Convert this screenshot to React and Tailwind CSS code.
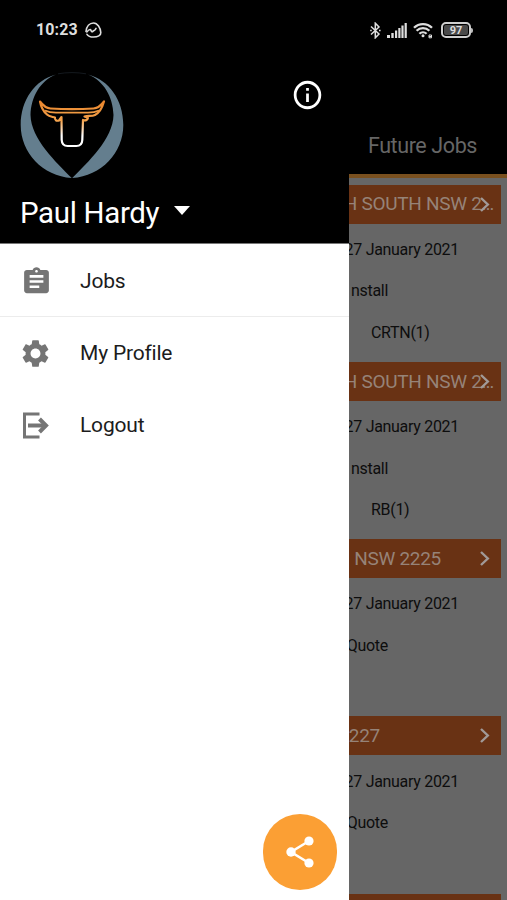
import { MdAssignment, MdSettings, MdInfoOutline } from "react-icons/md";

const jobs = [
  { title: "H SOUTH NSW 2…", type: "nstall", item: "CRTN(1)" },
  { title: "H SOUTH NSW 2…", type: "nstall", item: "RB(1)" },
  { title: "NSW 2225", type: "Quote" },
  { title: "227", type: "Quote" },
];

// where each clipped title ends inside its bar
const titleInset = ["pr-[7px]", "pr-[7px]", "pr-[60px]", "pr-[121px]"];

function StatusBar() {
  return (
    <div className="flex h-[60px] shrink-0 items-center justify-between bg-black pl-[36px] pr-[34px] text-[#dedede]">
      <div className="flex items-center gap-[7px]">
        <span className="text-[16px] font-bold leading-none tracking-[0.1px]">10:23</span>
        <svg className="h-[16px] w-[17px]" viewBox="0 0 17 16" fill="none" stroke="currentColor" strokeWidth="1.6" strokeLinecap="round" strokeLinejoin="round">
          <path d="M1 9.500C1.500 4.500 4.500 1 8.500 1c4 0 7 5 7.300 9.500.2 3-3 4.500-7.300 4.500C5.500 15 3 14 2 12.300" />
          <path d="M1.800 10C3 8.600 4.300 7.400 5.300 7.600c1 .2.700 2.200 1.700 2.200s1.200-1.300 2-1.200c.9 0 1.300-1 2-2.200" />
        </svg>
      </div>
      <div className="flex items-center">
        <svg className="h-[17px] w-[11px]" viewBox="0 0 11 17" fill="none" stroke="currentColor" strokeWidth="1.500">
          <path d="M1 4.500l8 7.500-3.700 3.800V1.200L9 5l-8 7.500" />
          <path d="M.2 8.500h1.500M9 8.500h1.600" strokeWidth="1.600" />
        </svg>
        <svg className="ml-[6px] h-[15px] w-[20px]" viewBox="0 0 20 15" fill="currentColor">
          <path d="M0 12h3v3H0zM4.300 10h2.400v5H4.300zM8 7.500h2.200V15H8zM11.300 5h2.200v10h-2.200zM14.400 2.500h2.200V15h-2.200zM17.600 0h2.200v15h-2.200z" />
        </svg>
        <svg className="ml-[6px] mr-px h-[17px] w-[21px]" viewBox="0 0 21 17" fill="none" stroke="currentColor" strokeWidth="2.300">
          <path d="M1 5.800c5-5 13-5 18 0M3.600 8.800c3.500-3.500 9.200-3.500 12.800 0M6.400 11.800c2-2 5.200-2 7.200 0" />
          <circle cx="10" cy="13.800" r="1.500" fill="currentColor" stroke="none" />
          <path d="M16 13h2.500v2.800H16zM16 14.500h3" strokeWidth="1" />
        </svg>
        <div className="ml-[6px] flex h-[16px] w-[30px] items-center justify-center rounded-[5px] border-2 border-[#cfcfcf] bg-black p-px">
          <div className="flex h-full w-full items-center justify-center rounded-[2px] bg-[#4a4a4a] text-[11px] font-bold leading-none">97</div>
        </div>
        <div className="h-[5px] w-[2px] rounded-r bg-[#bbb]" />
      </div>
    </div>
  );
}

function BullLogo() {
  return (
    <svg className="h-[107px] w-[104px]" viewBox="0 0 104 107" fill="none">
      <defs>
        <linearGradient id="horns" x1="0" y1="28" x2="0" y2="74" gradientUnits="userSpaceOnUse">
          <stop offset="0" stopColor="#e8832a" />
          <stop offset="0.45" stopColor="#f5a34c" />
          <stop offset="0.78" stopColor="#fff" />
        </linearGradient>
      </defs>
      <path
        d="M36 2.500C15 8 .7 28 .7 53c0 28 22 51 51 53C36 90 11 67 10.500 43 11 25 20 9 36 2.500Z"
        fill="#647e8e"
      />
      <path
        d="M68 2.500C89 8 103.300 28 103.300 53c0 28-22 51-51 53C68 90 93 67 93.500 43 93 25 84 9 68 2.500Z"
        fill="#647e8e"
      />
      <path d="M38 1.800C47 .2 57 .2 66 1.800" stroke="#1c242b" strokeWidth=".7" />
      <path
        d="M20 29.500c3 4 6 6.700 10.500 7 14 .9 29 .9 43 0C78 36.200 81 33.500 84 29.500c-2 7-5 11.500-9 13.500-3.500 1.800-7 .3-10.500 1.500l3.500 1.300c-.5 2.500-2.500 3-5 2.200L62.300 68c-.2 4.200-2 6-6 6h-8.600c-4 0-5.800-1.800-6-6L41.500 45l-2.500 3.500c-2.500.8-4.500-.5-4-3C31 44.500 29 44.500 27 42.500c-3.500-3-6-7.500-7-13Z"
        stroke="url(#horns)"
        strokeWidth="2.200"
        strokeLinejoin="round"
      />
      <path d="M25 38.500c4 2 7 2.200 11 2.200h32c4 0 7-.2 11-2.200" stroke="#f09a42" strokeWidth="1.800" />
    </svg>
  );
}

function LogoutIcon() {
  return (
    <svg className="h-[27px] w-[27px]" viewBox="0 0 27 27" fill="none" stroke="#757575" strokeWidth="3">
      <path d="M17.500 2H2.500v23h15" />
      <path d="M6 13.500h18" strokeWidth="4" />
      <path d="M17.500 7l6.500 6.500-6.500 6.500" strokeWidth="4" />
    </svg>
  );
}

function MenuItem({ icon, label, divider }) {
  return (
    <div
      className={
        divider
          ? "flex h-[73px] items-center border-b border-[#ececec] pl-[22px] pt-[2px]"
          : "flex h-[72px] items-center pl-[22px]"
      }
    >
      <span className="flex w-[58px] items-center">{icon}</span>
      <span className="pt-px text-[21px] leading-none tracking-[-0.2px] text-[#1c1c1c]">{label}</span>
    </div>
  );
}

function Drawer() {
  return (
    <div className="relative flex w-[349px] shrink-0 flex-col bg-white">
      <div className="flex h-[184px] shrink-0 flex-col border-b border-[#777] bg-black pl-[20px] pt-[12px]">
        <div className="flex items-start justify-between pr-[25px]">
          <BullLogo />
          <MdInfoOutline className="mt-[6px] h-[34px] w-[33px] text-white" preserveAspectRatio="none" />
        </div>
        <div className="mt-[15px] flex items-center text-white">
          <span className="text-[29.500px] leading-[38px] tracking-[-0.350px]">Paul Hardy</span>
          <svg className="mb-[5px] ml-[15px] h-[9px] w-[16px]" viewBox="0 0 16 9" fill="currentColor">
            <path d="M0 0h16L8 9z" />
          </svg>
        </div>
      </div>
      <MenuItem
        divider
        label="Jobs"
        icon={<MdAssignment className="-ml-[2px] h-[31px] w-[33px] text-[#757575]" preserveAspectRatio="none" />}
      />
      <MenuItem
        label="My Profile"
        icon={<MdSettings className="-ml-[3px] h-[33px] w-[33px] text-[#757575]" preserveAspectRatio="none" />}
      />
      <MenuItem label="Logout" icon={<LogoutIcon />} />
      <button className="absolute bottom-[10px] right-[12.500px] flex h-[76px] w-[74px] items-center justify-center rounded-full bg-[#fb9f34] text-white">
        <svg className="h-[32px] w-[28px]" viewBox="0 0 28 32" fill="currentColor">
          <path d="M23 5 5 16l18 11" fill="none" stroke="currentColor" strokeWidth="2.600" />
          <circle cx="5" cy="16" r="4.700" />
          <circle cx="23" cy="5" r="4.600" />
          <circle cx="23" cy="27" r="4.600" />
        </svg>
      </button>
    </div>
  );
}

function JobCard({ job, inset }) {
  return (
    <div className="mr-[6px] h-[177.300px] shrink-0 text-[16px] tracking-[-0.300px] text-[#0d0d0d]">
      <div className="relative flex h-[39px] items-center bg-[#693214]">
        <div className={`flex w-full justify-end overflow-hidden whitespace-nowrap pt-px text-[19px] tracking-[-0.300px] text-[#968378] ${inset}`}>
          <span className="shrink-0">{job.title}</span>
        </div>
        <svg className="absolute right-[11px] top-[12px] h-[15px] w-[10px]" viewBox="0 0 10 15" fill="none" stroke="#a19a98" strokeWidth="2.400">
          <path d="M1 1l6.800 6.500L1 14" />
        </svg>
      </div>
      <div className="mt-[5.500px] flex h-[41.500px] items-center justify-end overflow-hidden whitespace-nowrap pr-[42px]">
        <span className="shrink-0">27 January 2021</span>
      </div>
      <div className="flex h-[41.500px] items-center justify-end overflow-hidden whitespace-nowrap pr-[113px]">
        <span className="shrink-0">{job.type}</span>
      </div>
      {job.item && <div className="flex h-[41.500px] items-center pl-[22px]">{job.item}</div>}
    </div>
  );
}

function JobsPage() {
  return (
    <div className="flex min-w-0 flex-1 flex-col overflow-hidden bg-[#666]">
      <div className="flex h-[114px] shrink-0 items-end justify-end bg-black pb-[13px] pr-[30px]">
        <span className="text-[21.500px] leading-[30px] tracking-[-0.400px] text-[#666]">Future Jobs</span>
      </div>
      <div className="mb-[7px] h-[3.500px] shrink-0 bg-[#79501f]" />
      {jobs.map((job, i) => (
        <JobCard key={i} job={job} inset={titleInset[i]} />
      ))}
      <div className="mr-[6px] h-[39px] shrink-0 bg-[#693214]" />
    </div>
  );
}

export default function App() {
  return (
    <div className="flex h-[900px] w-[507px] flex-col overflow-hidden bg-black font-[Roboto,sans-serif]">
      <StatusBar />
      <div className="flex min-h-0 flex-1">
        <Drawer />
        <JobsPage />
      </div>
    </div>
  );
}
